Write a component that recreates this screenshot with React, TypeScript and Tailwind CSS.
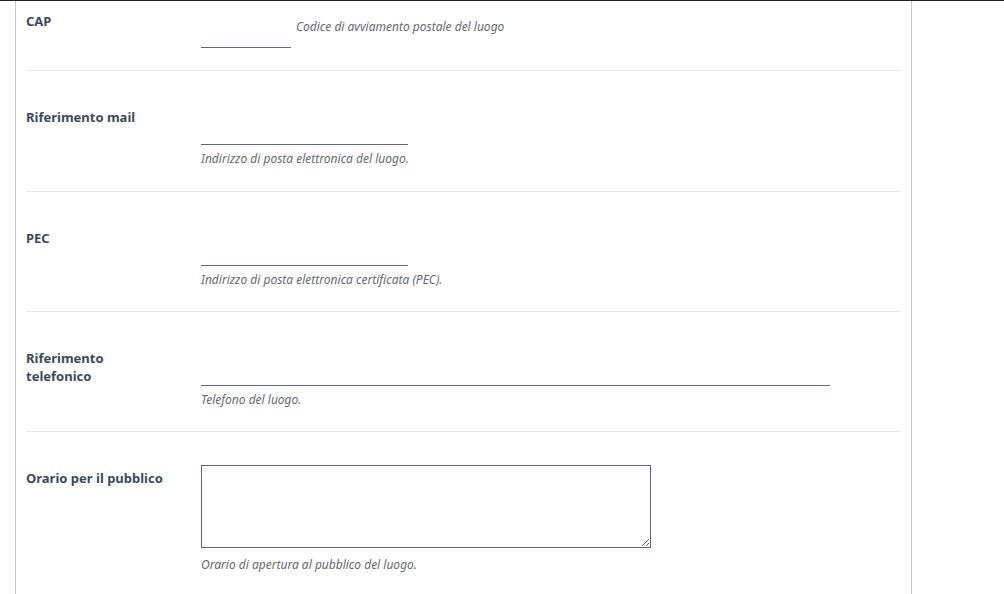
const FONT = "font-['Noto_Sans','DejaVu_Sans',sans-serif]";

type Field = {
  label: string;
  desc: string;
  kind: "input" | "textarea";
  width: string;
  height: string;
};

const FIELDS: Field[] = [
  { label: "Riferimento mail", desc: "Indirizzo di posta elettronica del luogo.", kind: "input", width: "w-[207px]", height: "h-[121px]" },
  { label: "PEC", desc: "Indirizzo di posta elettronica certificata (PEC).", kind: "input", width: "w-[207px]", height: "h-[120px]" },
  { label: "Riferimento telefonico", desc: "Telefono del luogo.", kind: "input", width: "w-[629px]", height: "h-[120px]" },
  { label: "Orario per il pubblico", desc: "Orario di apertura al pubblico del luogo.", kind: "textarea", width: "w-[450px]", height: "h-auto" },
];

function Label({ children }: { children: React.ReactNode }) {
  return (
    <div className="w-[140px] shrink-0 mr-[35px] text-[13px] font-bold leading-[18px] text-[#3b4a5b]">
      {children}
    </div>
  );
}

function Desc({ children }: { children: React.ReactNode }) {
  return <p className="text-[12px] italic leading-[16px] text-[#666a70]">{children}</p>;
}

export default function App() {
  return (
    <div className={`min-h-screen bg-white ${FONT}`}>
      <div className="h-px bg-[#1e2327]" />
      <div className="ml-[15px] w-[897px] min-h-[593px] border-x border-[#c3c4c7] px-[10px]">
        {/* CAP row, partly scrolled out of view */}
        <div className="flex h-[70px] border-b border-[#e6e6e6] pt-[11px]">
          <Label>CAP</Label>
          <div className="flex items-start pt-[6px]">
            <input
              type="text"
              className="h-[30px] w-[90px] border-0 border-b border-[#5b6b7d] bg-transparent outline-none"
            />
            <div className="ml-[5px] mt-[1px]">
              <Desc>Codice di avviamento postale del luogo</Desc>
            </div>
          </div>
        </div>

        {FIELDS.map((f) => (
          <div
            key={f.label}
            className={`flex ${f.height} border-b border-[#e6e6e6] last:border-b-0`}
          >
            <div className="pt-[37px]">
              <Label>{f.label}</Label>
            </div>
            {f.kind === "input" ? (
              <div className="pt-[44px]">
                <input
                  type="text"
                  className={`block h-[30px] ${f.width} border-0 border-b border-[#5b6b7d] bg-transparent outline-none`}
                />
                <div className="mt-[6px]">
                  <Desc>{f.desc}</Desc>
                </div>
              </div>
            ) : (
              <div className="pt-[33px]">
                <textarea
                  className={`block h-[83px] ${f.width} border border-[#5b6b7d] bg-white outline-none`}
                />
                <div className="mt-[9px]">
                  <Desc>{f.desc}</Desc>
                </div>
              </div>
            )}
          </div>
        ))}
      </div>
    </div>
  );
}
